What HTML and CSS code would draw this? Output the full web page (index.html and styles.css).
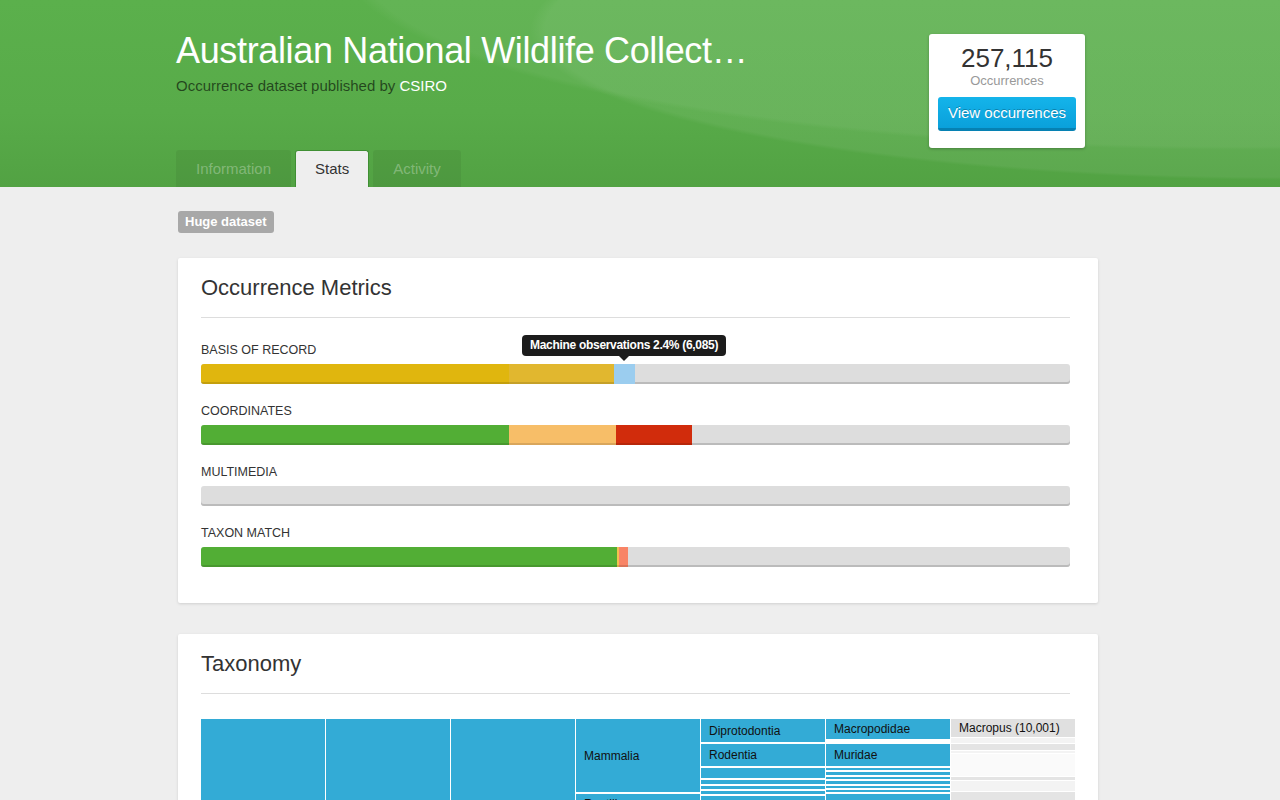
FILE: index.html
```html
<!DOCTYPE html>
<html>
<head>
<meta charset="utf-8">
<title>Australian National Wildlife Collection</title>
<link rel="stylesheet" href="styles.css">
</head>
<body>
<header class="hero">
  <div class="wrap">
    <div class="hero-top">
      <div class="hero-text">
        <h1 class="title">Australian National Wildlife Collect…</h1>
        <p class="subtitle">Occurrence dataset published by <a class="publisher" href="#">CSIRO</a></p>
      </div>
      <div class="count-box">
        <div class="count-num">257,115</div>
        <div class="count-label">Occurrences</div>
        <a class="btn-view" href="#">View occurrences</a>
      </div>
    </div>
    <nav class="tabs">
      <a class="tab" href="#">Information</a>
      <a class="tab tab-active" href="#">Stats</a>
      <a class="tab" href="#">Activity</a>
    </nav>
  </div>
</header>

<main class="wrap main">
  <span class="badge">Huge dataset</span>

  <section class="card">
    <h2 class="card-title">Occurrence Metrics</h2>
    <div class="metrics">
      <div class="metric">
        <div class="metric-label">Basis of record</div>
        <div class="bar">
          <span class="seg seg-yellow" style="width:35.4%"></span>
          <span class="seg seg-yellow2" style="width:12.1%"></span>
          <span class="seg seg-blue" style="width:2.5%"></span>
        </div>
        <div class="tooltip">Machine observations 2.4% (6,085)</div>
      </div>
      <div class="metric">
        <div class="metric-label">Coordinates</div>
        <div class="bar">
          <span class="seg seg-green" style="width:35.4%"></span>
          <span class="seg seg-orange" style="width:12.4%"></span>
          <span class="seg seg-red" style="width:8.7%"></span>
        </div>
      </div>
      <div class="metric">
        <div class="metric-label">Multimedia</div>
        <div class="bar"></div>
      </div>
      <div class="metric">
        <div class="metric-label">Taxon match</div>
        <div class="bar">
          <span class="seg seg-green" style="width:47.9%"></span>
          <span class="seg seg-gold" style="width:0.2%"></span>
          <span class="seg seg-salmon" style="width:1.0%"></span>
        </div>
      </div>
    </div>
  </section>

  <section class="card">
    <h2 class="card-title">Taxonomy</h2>
    <div class="treemap">
      <div class="tm-col"><div class="tm-cell tm-fill"></div></div>
      <div class="tm-col"><div class="tm-cell tm-fill"></div></div>
      <div class="tm-col"><div class="tm-cell tm-fill"></div></div>
      <div class="tm-col">
        <div class="tm-cell" style="height:73px">Mammalia</div>
        <div class="tm-cell tm-fill tm-top">Reptilia</div>
      </div>
      <div class="tm-col">
        <div class="tm-cell" style="height:23px">Diprotodontia</div>
        <div class="tm-cell" style="height:22px">Rodentia</div>
        <div class="tm-cell" style="height:10px"></div>
        <div class="tm-cell" style="height:4px"></div>
        <div class="tm-cell" style="height:3px"></div>
        <div class="tm-cell" style="height:3px"></div>
        <div class="tm-cell tm-fill tm-top">Squamata</div>
      </div>
      <div class="tm-col">
        <div class="tm-cell" style="height:20px">Macropodidae</div>
        <div class="tm-gap" style="height:1px"></div>
        <div class="tm-cell" style="height:22px">Muridae</div>
        <div class="tm-cell" style="height:2px"></div>
        <div class="tm-cell" style="height:3px"></div>
        <div class="tm-cell" style="height:2px"></div>
        <div class="tm-cell" style="height:3px"></div>
        <div class="tm-cell" style="height:2px"></div>
        <div class="tm-cell" style="height:2px"></div>
        <div class="tm-cell tm-fill"></div>
      </div>
      <div class="tm-col tm-genus">
        <div class="tm-cell tm-grey" style="height:18px">Macropus (10,001)</div>
        <div class="tm-cell tm-faint" style="height:5px"></div>
        <div class="tm-cell tm-grey2" style="height:6px"></div>
        <div class="tm-cell tm-faint" style="height:2px"></div>
        <div class="tm-cell tm-faint2" style="height:22px"></div>
        <div class="tm-cell tm-grey2" style="height:3px"></div>
        <div class="tm-cell tm-faint" style="height:10px"></div>
        <div class="tm-cell tm-grey2 tm-fill"></div>
      </div>
    </div>
  </section>
</main>
</body>
</html>
```

FILE: styles.css
```css
* { box-sizing: border-box; }

html, body {
  margin: 0;
  padding: 0;
}

body {
  background: #eeeeee;
  font-family: "Liberation Sans", Arial, Helvetica, sans-serif;
  color: #333;
}

.wrap {
  width: 924px;
  margin: 0 auto;
  padding-right: 4px;
}

/* ---------- hero ---------- */
.hero {
  height: 187px;
  background:
    radial-gradient(ellipse 760px 150px at 1290px 30px, rgba(255,255,255,0.06) 98%, rgba(255,255,255,0) 100%),
    radial-gradient(ellipse 900px 190px at 1240px -40px, rgba(255,255,255,0.05) 98%, rgba(255,255,255,0) 100%),
    linear-gradient(to bottom, #5bb04c 0%, #58ab49 60%, #52a243 100%);
}

.hero .wrap {
  padding-left: 0;
  margin-left: calc(50% - 464px);
}

.hero-top {
  display: flex;
  justify-content: space-between;
  align-items: flex-start;
  padding-top: 31px;
  height: 150px;
}

.title {
  margin: 0;
  font-size: 36px;
  line-height: 40px;
  font-weight: normal;
  color: #fff;
  white-space: nowrap;
  letter-spacing: -0.35px;
}

.subtitle {
  margin: 6px 0 0;
  font-size: 15px;
  line-height: 18px;
  color: rgba(0, 0, 0, 0.6);
}

.publisher {
  color: #fff;
  text-decoration: none;
}

.count-box {
  margin-top: 3px;
  margin-right: 11px;
  width: 156px;
  height: 114px;
  background: #fff;
  border-radius: 3px;
  box-shadow: 0 1px 3px rgba(0,0,0,0.25);
  padding: 9px 9px 0;
  text-align: center;
}

.count-num {
  font-size: 26px;
  line-height: 30px;
  color: #333;
}

.count-label {
  font-size: 13px;
  line-height: 16px;
  color: #999;
}

.btn-view {
  display: block;
  margin-top: 8px;
  height: 34px;
  line-height: 31px;
  border-radius: 3px;
  background: linear-gradient(to bottom, #14b4ea 0%, #0aa0db 100%);
  border-bottom: 3px solid #0681b3;
  color: #fff;
  font-size: 15px;
  text-decoration: none;
  text-shadow: 0 -1px 0 rgba(0,0,0,0.25);
}

.tabs {
  display: flex;
  gap: 4px;
  height: 37px;
}

.tab {
  display: block;
  height: 37px;
  line-height: 37px;
  padding: 0 20px;
  font-size: 15px;
  color: rgba(255,255,255,0.3);
  background: rgba(0,0,0,0.06);
  border-radius: 3px 3px 0 0;
  text-decoration: none;
}

.tab-active {
  background: #eeeeee;
  color: #333;
  border: 1px solid #3f8f33;
  border-bottom: none;
  line-height: 36px;
  padding: 0 19px;
}

/* ---------- main ---------- */
.main {
  padding-top: 24px;
  padding-bottom: 40px;
}

.badge {
  display: inline-block;
  margin-bottom: 25px;
  height: 22px;
  line-height: 22px;
  padding: 0 7px;
  background: #a8a8a8;
  color: #fff;
  font-size: 13px;
  font-weight: bold;
  border-radius: 3px;
}

.card {
  background: #fff;
  box-shadow: 0 1px 3px rgba(0,0,0,0.13);
  border-radius: 2px;
  padding: 0 28px 36px 23px;
  margin-bottom: 31px;
}

.card-title {
  margin: 0;
  height: 60px;
  display: flex;
  align-items: center;
  padding-top: 1px;
  font-size: 22px;
  font-weight: normal;
  color: #333;
  border-bottom: 1px solid #dddddd;
}

.metrics {
  padding-top: 24px;
}

.metric {
  position: relative;
  margin-bottom: 19px;
}

.metric:last-child { margin-bottom: 0; }

.metric-label {
  font-size: 12.5px;
  line-height: 16px;
  text-transform: uppercase;
  color: #333;
  margin-bottom: 6px;
}

.bar {
  display: flex;
  height: 20px;
  background: #dddddd;
  border-radius: 3px;
  overflow: hidden;
  box-shadow: inset 0 -2px 0 #bbbbbb;
}

.seg {
  display: block;
  height: 100%;
  box-shadow: inset 0 -2px 0 rgba(0,0,0,0.12);
}

.seg-yellow { background: #e0b60e; }
.seg-yellow2 { background: #e1b72f; }
.seg-blue { background: #9bcdef; box-shadow: none; }
.seg-green { background: #52ae35; }
.seg-orange { background: #f7be68; }
.seg-red { background: #d12c0c; }
.seg-gold { background: #f2c14f; }
.seg-salmon { background: #f88466; }

.tooltip {
  position: absolute;
  left: 321px;
  top: -7px;
  height: 21px;
  line-height: 21px;
  padding: 0 8px;
  background: #1c1c1c;
  color: #fff;
  font-size: 12px;
  font-weight: bold;
  letter-spacing: -0.3px;
  border-radius: 4px;
  white-space: nowrap;
}

.tooltip::after {
  content: "";
  position: absolute;
  left: 97px;
  bottom: -5px;
  border-left: 5px solid transparent;
  border-right: 5px solid transparent;
  border-top: 5px solid #1c1c1c;
}

/* ---------- treemap ---------- */
.treemap {
  margin-top: 25px;
  display: flex;
  gap: 1px;
  width: 874px;
  height: 120px;
  overflow: hidden;
}

.tm-col {
  width: 124px;
  display: flex;
  flex-direction: column;
  gap: 2px;
}

.tm-cell {
  background: #33abd6;
  font-size: 12px;
  color: #111;
  padding-left: 8px;
  display: flex;
  align-items: center;
  overflow: hidden;
  white-space: nowrap;
  flex: none;
}

.tm-top {
  align-items: flex-start;
  padding-top: 3px;
}

.tm-fill { flex: 1 1 auto; min-height: 0; }
.tm-gap { flex: none; }

.tm-genus { gap: 1px; }

.tm-grey { background: #e0e0e0; color: #111; }
.tm-grey2 { background: #e4e4e4; }
.tm-faint { background: #f3f3f3; }
.tm-faint2 { background: #fafafa; }
```
